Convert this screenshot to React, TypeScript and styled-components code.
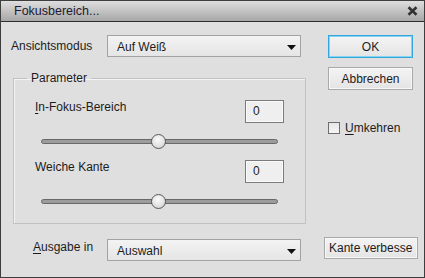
import React from "react";
import styled, { createGlobalStyle } from "styled-components";

const GlobalStyle = createGlobalStyle`
  html, body { margin: 0; padding: 0; background: #dfdfdf; }
  body {
    font-family: "Liberation Sans", Arial, sans-serif;
    font-size: 12px;
    color: #1c1c1c;
  }
  * { box-sizing: border-box; }
`;

const Window = styled.div`
  width: 425px;
  height: 278px;
  border: 1px solid #3e3e3e;
  background: #dfdfdf;
  display: flex;
  flex-direction: column;
  overflow: hidden;
`;

const TitleBar = styled.div`
  height: 21px;
  flex: none;
  display: flex;
  align-items: center;
  justify-content: space-between;
  padding: 0 6px 0 13px;
  background: linear-gradient(#dedede, #a7a7a7);
  border-bottom: 1px solid #2e2e2e;
`;

const TitleText = styled.span`
  font-size: 12.5px;
  color: #231a33;
  line-height: 20px;
`;

const Body = styled.div`
  display: flex;
  flex-direction: column;
  padding: 13px 0 0 9px;
`;

const TopArea = styled.div`
  display: flex;
  align-items: flex-start;
`;

const LeftCol = styled.div`
  width: 296px;
  display: flex;
  flex-direction: column;
`;

const FieldRow = styled.div`
  display: flex;
  align-items: flex-start;
`;

const RowLabel = styled.span<{ $indent: number; $offset: number }>`
  width: 97px;
  padding-left: ${(p) => p.$indent}px;
  margin-top: ${(p) => p.$offset}px;
  line-height: 15px;
  white-space: nowrap;
`;

const Select = styled.div<{ $offset?: number }>`
  width: 194px;
  height: 22px;
  margin-top: ${(p) => p.$offset ?? 0}px;
  border: 1px solid #a3a3a3;
  background: linear-gradient(#f3f3f3, #e5e5e5);
  display: flex;
  align-items: center;
  justify-content: space-between;
  padding: 1px 4px 0 9px;
`;

const Arrow = styled.svg`
  display: block;
  margin-top: 1px;
`;

const Fieldset = styled.fieldset`
  margin: 14px 0 0 3px;
  width: 293px;
  padding: 0 0 14px;
  border: 1px solid #c2c2c2;
  box-shadow: inset 1px 1px 0 #f4f4f4;
`;

const Legend = styled.legend`
  margin-left: 13px;
  padding: 0 4px;
  line-height: 15px;
  font-size: 12px;
`;

const ParamRow = styled.div<{ $top: number }>`
  display: flex;
  align-items: flex-start;
  justify-content: space-between;
  padding: 0 21px 0 21px;
  margin-top: ${(p) => p.$top}px;
`;

const ParamLabel = styled.span`
  line-height: 15px;
`;

const NumberBox = styled.div`
  width: 39px;
  height: 23px;
  border: 1px solid #7b7b7b;
  box-shadow: inset 0 0 0 1px #fafafa;
  background: #efefef;
  padding: 0 0 0 7px;
  line-height: 21px;
`;

const Slider = styled.div`
  position: relative;
  height: 15px;
  margin: 11px 27px 0 27px;
  display: flex;
  align-items: center;
`;

const Track = styled.div`
  width: 100%;
  height: 5px;
  border: 1px solid #686868;
  border-radius: 3px;
  background: #9c9c9c;
`;

const Thumb = styled.div`
  position: absolute;
  top: 0;
  width: 15px;
  height: 15px;
  margin-left: -7px;
  border-radius: 50%;
  border: 1px solid #595959;
  background: radial-gradient(circle at 45% 35%, #fbfbfb, #dcdcdc 70%, #c9c9c9);
`;

const RightCol = styled.div`
  margin-left: 22px;
  width: 85px;
  display: flex;
  flex-direction: column;
`;

const Button = styled.div<{ $primary?: boolean }>`
  height: 23px;
  border: 1px solid ${(p) => (p.$primary ? "#33a6dc" : "#a9a9a9")};
  box-shadow: ${(p) => (p.$primary ? "inset 0 0 0 1px #86d3f3" : "inset 0 0 0 1px #f7f7f7")};
  background: linear-gradient(#f4f4f4, #e4e4e4);
  display: flex;
  align-items: center;
  justify-content: center;
  & + & {
    margin-top: 9px;
  }
`;

const CheckRow = styled.div`
  margin-top: 31px;
  display: flex;
  align-items: center;
  gap: 5px;
`;

const CheckBox = styled.div`
  width: 12px;
  height: 12px;
  border: 1px solid #6e6e6e;
  background: linear-gradient(#e6e6e6, #f6f6f6);
`;

const CheckLabel = styled.span`
  line-height: 14px;
`;

const Mnemonic = styled.u`
  text-decoration: underline;
  text-underline-offset: 2px;
`;

const BottomRow = styled.div`
  margin-top: 13px;
  display: flex;
  align-items: flex-start;
`;

const WideButton = styled.div`
  margin-left: 23px;
  width: 94px;
  height: 22px;
  border: 1px solid #a9a9a9;
  box-shadow: inset 0 0 0 1px #f7f7f7;
  background: linear-gradient(#f4f4f4, #e4e4e4);
  padding: 0 0 0 4px;
  line-height: 20px;
  white-space: nowrap;
  overflow: hidden;
`;

const DropArrow = () => (
  <Arrow width="9" height="5" viewBox="0 0 9 5">
    <polygon points="0,0 9,0 4.5,5" fill="#111" />
  </Arrow>
);

const CloseIcon = () => (
  <svg width="11" height="10" viewBox="0 0 11 10">
    <path d="M1.5 1.2 L9.5 8.8 M9.5 1.2 L1.5 8.8" stroke="#333" strokeWidth="2.6" strokeLinecap="butt" />
  </svg>
);

const ParamSlider = ({ value }: { value: number }) => (
  <Slider>
    <Track />
    <Thumb style={{ left: `${value}%` }} />
  </Slider>
);

export default function App() {
  return (
    <>
      <GlobalStyle />
      <Window>
        <TitleBar>
          <TitleText>Fokusbereich...</TitleText>
          <CloseIcon />
        </TitleBar>
        <Body>
          <TopArea>
            <LeftCol>
              <FieldRow>
                <RowLabel $indent={1} $offset={4}>Ansichtsmodus</RowLabel>
                <Select>
                  <span>Auf Weiß</span>
                  <DropArrow />
                </Select>
              </FieldRow>
              <Fieldset>
                <Legend>Parameter</Legend>
                <ParamRow $top={14}>
                  <ParamLabel>
                    <Mnemonic>I</Mnemonic>n-Fokus-Bereich
                  </ParamLabel>
                  <NumberBox>0</NumberBox>
                </ParamRow>
                <ParamSlider value={49.3} />
                <ParamRow $top={11}>
                  <ParamLabel>Weiche Kante</ParamLabel>
                  <NumberBox>0</NumberBox>
                </ParamRow>
                <ParamSlider value={49.3} />
              </Fieldset>
            </LeftCol>
            <RightCol>
              <Button $primary>OK</Button>
              <Button>Abbrechen</Button>
              <CheckRow>
                <CheckBox />
                <CheckLabel>
                  <Mnemonic>U</Mnemonic>mkehren
                </CheckLabel>
              </CheckRow>
            </RightCol>
          </TopArea>
          <BottomRow>
            <RowLabel $indent={23} $offset={3}>
              <Mnemonic>A</Mnemonic>usgabe in
            </RowLabel>
            <Select $offset={2}>
              <span>Auswahl</span>
              <DropArrow />
            </Select>
            <WideButton>Kante verbesse</WideButton>
          </BottomRow>
        </Body>
      </Window>
    </>
  );
}
